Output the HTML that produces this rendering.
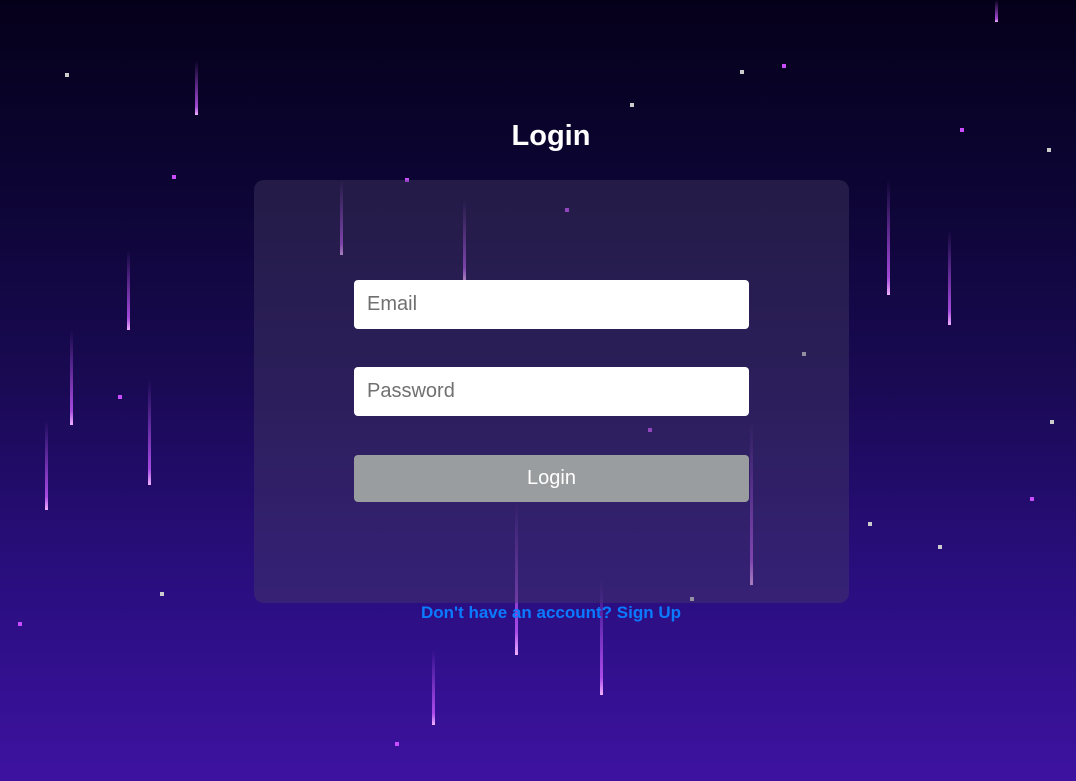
<!DOCTYPE html>
<html><head><meta charset="utf-8"><style>
html,body{margin:0;padding:0;width:1076px;height:781px;overflow:hidden}
body{position:relative;font-family:"Liberation Sans",Arial,sans-serif;
background:linear-gradient(180deg,#05001a 0%,#0d0535 25%,#1a0a55 50%,#2a0e80 75%,#3d12a0 100%)}
.s{position:absolute;width:3px;background:linear-gradient(180deg,rgba(180,60,255,0),rgba(200,90,255,.8) 85%,#f0b0ff)}
.d{position:absolute;width:4px;height:4px;background:#c94cff}
.w{position:absolute;width:4px;height:4px;background:#ccc}
h1{position:absolute;left:26px;right:0;top:120px;margin:0;text-align:center;color:#fff;font-size:29px;font-weight:bold}
.card{position:absolute;left:254px;top:180px;width:595px;height:423px;border-radius:10px;background:rgba(70,60,100,.42)}
.in{position:absolute;left:354px;width:395px;height:49px;background:#fff;border-radius:4px;box-sizing:border-box;padding-left:13px;line-height:49px;font-size:20px;color:#707070}
.btn{position:absolute;left:354px;top:455px;width:395px;height:47px;background:#9a9d9f;border-radius:4px;color:#fff;font-size:20px;text-align:center;line-height:47px}
.lk{position:absolute;left:26px;right:0;top:603px;text-align:center;color:#0a7bff;font-weight:bold;font-size:17px}
</style></head><body>
<div class="s" style="left:70px;top:330px;height:95px"></div>
<div class="s" style="left:127px;top:250px;height:80px"></div>
<div class="s" style="left:148px;top:380px;height:105px"></div>
<div class="s" style="left:340px;top:180px;height:75px"></div>
<div class="s" style="left:463px;top:200px;height:80px"></div>
<div class="s" style="left:515px;top:500px;height:155px"></div>
<div class="s" style="left:600px;top:580px;height:115px"></div>
<div class="s" style="left:750px;top:420px;height:165px"></div>
<div class="s" style="left:948px;top:230px;height:95px"></div>
<div class="s" style="left:887px;top:180px;height:115px"></div>
<div class="s" style="left:995px;top:0;height:22px"></div>
<div class="s" style="left:195px;top:60px;height:55px"></div>
<div class="s" style="left:432px;top:650px;height:75px"></div>
<div class="s" style="left:45px;top:420px;height:90px"></div>
<div class="d" style="left:172px;top:175px"></div><div class="d" style="left:405px;top:178px"></div>
<div class="d" style="left:565px;top:208px"></div><div class="d" style="left:782px;top:64px"></div>
<div class="d" style="left:1030px;top:497px"></div><div class="d" style="left:395px;top:742px"></div>
<div class="d" style="left:18px;top:622px"></div><div class="d" style="left:648px;top:428px"></div>
<div class="d" style="left:118px;top:395px"></div><div class="d" style="left:960px;top:128px"></div>
<div class="w" style="left:630px;top:103px"></div><div class="w" style="left:65px;top:73px"></div>
<div class="w" style="left:1047px;top:148px"></div><div class="w" style="left:868px;top:522px"></div>
<div class="w" style="left:160px;top:592px"></div><div class="w" style="left:690px;top:597px"></div>
<div class="w" style="left:802px;top:352px"></div><div class="w" style="left:938px;top:545px"></div>
<div class="w" style="left:1050px;top:420px"></div><div class="w" style="left:740px;top:70px"></div>
<h1>Login</h1>
<div class="card"></div>
<div class="in" style="top:280px">Email</div>
<div class="in" style="top:367px">Password</div>
<div class="btn">Login</div>
<div class="lk">Don't have an account? Sign Up</div>
</body></html>
